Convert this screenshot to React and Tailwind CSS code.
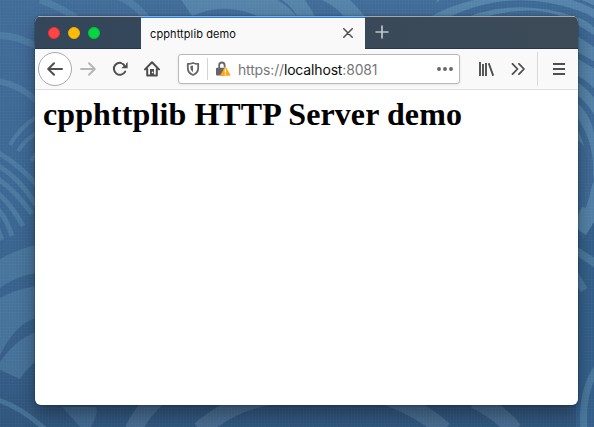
import React from "react";

function Wallpaper() {
  return (
    <svg className="absolute inset-0 h-[427px] w-[594px]" viewBox="0 0 594 427" fill="none">
      <defs>
        <linearGradient id="base" x1="0" y1="0" x2="0" y2="1">
          <stop offset="0" stopColor="#416c99" />
          <stop offset="0.5" stopColor="#3a6692" />
          <stop offset="0.85" stopColor="#345d87" />
          <stop offset="1" stopColor="#2f557c" />
        </linearGradient>
        <pattern id="weave" width="3" height="3" patternUnits="userSpaceOnUse">
          <path d="M0 .5H3M.5 0V3" stroke="#ffffff" strokeOpacity=".02" />
        </pattern>
      </defs>
      <path fill="url(#base)" d="M0 0H594V427H0z" />
      <g stroke="#5e8db1" strokeOpacity=".45">
        <path d="M-5 35Q18 35 38 47" strokeWidth="7" />
        <path d="M-5 81Q18 83 38 102" strokeWidth="6" />
        <path d="M10 145Q20 127 38 116M18 151Q26 139 38 132M31 161L38 152" strokeWidth="4" />
        <path d="M40 0Q58 6 76 18M120 -3Q136 4 147 19" strokeWidth="7" />
        <path d="M-5 151Q18 163 38 186M-5 164Q18 176 36 205M-5 177Q15 190 32 214M-5 191Q10 202 23 226M-5 206Q6 217 12 236M-5 222L2 240" strokeWidth="5" />
        <path d="M-5 399Q20 406 46 430" strokeWidth="5" />
      </g>
      <g stroke="#5e82a5" strokeOpacity=".48">
        <path d="M133 430Q147 402 170 390M200 430Q240 395 291 395M370 391Q417 405 444 430M475 400Q500 412 514 430" strokeWidth="17" />
      </g>
      <g fill="#5e8db1" fillOpacity=".68">
        <path d="M180 -2H274Q291 7 298 19H263Q228 0 192 16zM282 0H305Q312 10 316 19H298Q294 8 282 0z" />
        <path d="M322 0H350Q360 10 366 18H345Q337 7 322 0zM436 3L440 0H437z" />
        <path d="M425 20Q461 -2 500 -3H594V240L577 229V218L594 181Q590 146 577 140z" />
      </g>
      <g fill="#5e8db1" fillOpacity=".42">
        <path d="M0 259Q18 249 36 245V273Q16 276 0 288zM0 298Q16 289 36 286V318Q16 323 0 355zM0 362Q15 340 36 332V361Q24 372 20 379L0 370z" />
        <path d="M62 407H96Q99 414 89 430H83Z" fillOpacity=".35" />
      </g>
      <g stroke="#3d6995">
        <path d="M447 22Q510 -10 578 14Q591 18 598 27" strokeWidth="7" />
        <path d="M480 22Q541 2 579 29L598 41M577 32L598 46" strokeWidth="6" />
        <path d="M575 54L598 67M575 78Q588 84 598 98M575 97Q598 115 598 145" strokeWidth="6" />
        <path d="M574 118Q601 157 583 207" strokeWidth="6" />
        <path d="M560 -5Q584 1 599 10" strokeWidth="3" />
      </g>
      <path d="M575 222L583 240L594 222V427H576z" fill="#335f8a" />
      <g stroke="#5785aa" strokeOpacity=".6">
        <path d="M575 250L598 265M575 275L584 290" strokeWidth="8" />
        <path d="M584 430Q581 390 598 367" strokeWidth="7" />
      </g>
      <path fill="url(#weave)" d="M0 0H594V427H0z" />
    </svg>
  );
}

function Icon({ className, box, children }) {
  return (
    <svg
      className={"shrink-0 " + className}
      viewBox={box}
      fill="none"
      stroke="#4f4f50"
      strokeWidth="2"
      strokeLinecap="round"
      strokeLinejoin="round"
    >
      {children}
    </svg>
  );
}

function TabBar() {
  return (
    <div className="flex h-[33px] shrink-0 border-t border-[#a5a9ad] bg-linear-to-r from-[#33465a] to-[#3d4b58]">
      <div className="flex w-[106px] items-center gap-2 border-b border-[#293746] pl-[13px]">
        <i className="size-3 rounded-full border border-[#ef3034] bg-[#ff4545]" />
        <i className="size-3 rounded-full border border-[#eead05] bg-[#ffbd08]" />
        <i className="size-3 rounded-full border border-[#04c636] bg-[#04d543]" />
      </div>
      <div className="flex w-[224px] items-center justify-between border-t border-[#0a84ff] bg-[#f9f9fa] pr-[12px] pl-[9px]">
        <span className="font-[Inter,sans-serif] text-[11px] leading-4 tracking-[0.1px] text-[#0c0c0d]">cpphttplib demo</span>
        <Icon className="mb-[2px] h-[10px] w-[10px]" box="0 0 10 10">
          <path d="M.8 .8L9.2 9.2M9.2 .8L.8 9.2" strokeWidth="1.5" />
        </Icon>
      </div>
      <div className="flex flex-1 border-b border-[#293746] pt-[8px] pl-[10px]">
        <Icon className="h-[14px] w-[14px]" box="0 0 14 14">
          <path d="M7 .5V13.5M.5 7H13.5" stroke="#c0c5c9" strokeWidth="1.7" strokeLinecap="butt" />
        </Icon>
      </div>
    </div>
  );
}

function AddressBar() {
  return (
    <div className="ml-[18px] flex h-[30px] w-[282px] shrink-0 items-center rounded-[3px] border border-[#b8b8b9] bg-white pr-[6px] pl-[7px] shadow-[0_1px_3px_rgba(0,0,0,0.08)]">
      <Icon className="h-[14px] w-[14px]" box="0 0 14 14">
        <path d="M7 1Q9.5 1.8 12.2 2V6Q12.2 11 7 13Q1.8 11 1.8 6V2Q4.5 1.8 7 1z" stroke="#666668" strokeWidth="1.8" />
        <path d="M7 3.6V10.2Q4.4 8.8 4.4 6V4z" fill="#666668" stroke="none" />
      </Icon>
      <span className="ml-[7px] h-[22px] w-px bg-[#d4d4d5]" />
      <Icon className="ml-[7px] h-[16px] w-[16px]" box="0 0 16 16">
        <path d="M4.2 7V4.2A2.7 2.7 0 0 1 9.6 4.2V5.5" stroke="#666668" strokeWidth="1.8" />
        <rect x="1" y="6.8" width="9" height="7.6" rx="1" fill="#666668" stroke="none" />
        <path d="M10.4 6.5L14.7 14H6.1z" fill="#ffa70d" stroke="#ffa70d" strokeWidth="1.5" />
        <path d="M10.4 8.5V11.2M10.4 13.2V13.3" stroke="white" strokeWidth="1.3" />
      </Icon>
      <span className="ml-[7px] mt-[2px] w-[142px] font-[Inter,sans-serif] text-[14px] leading-5 tracking-[-0.16px] whitespace-nowrap text-[#777779]">
        https://<span className="text-[#0c0c0d]">localhost</span>:8081
      </span>
      <Icon className="ml-auto h-[4px] w-[16px]" box="0 0 16 4">
        <path d="M2 2H2.01M8 2H8.01M14 2H14.01" stroke="#666668" strokeWidth="3.9" />
      </Icon>
    </div>
  );
}

function Toolbar() {
  return (
    <div className="flex h-[41px] shrink-0 items-center border-b border-[#dfdfe0] bg-[#f9f9fa] pl-[3px]">
      <div className="flex size-[34px] shrink-0 items-center justify-center rounded-full border border-[#aaaaab] bg-white">
        <Icon className="h-[14px] w-[16px]" box="0 0 16 14">
          <path d="M15 7H1.5M7 1.2L1.2 7L7 12.8" />
        </Icon>
      </div>
      <Icon className="ml-[8px] h-[14px] w-[16px]" box="0 0 16 14">
        <path d="M1 7H14.5M9 1.2L14.8 7L9 12.8" stroke="#b7b7b8" />
      </Icon>
      <Icon className="ml-[16px] h-[16px] w-[16px]" box="0 0 16 16">
        <path d="M13.2 10.6A6 6 0 1 1 12.4 3.8L14 5.8" />
        <path d="M15.6 1V7.2H9.4z" fill="#4f4f50" stroke="none" />
        <path d="M9.4 1H14V5.6z" fill="#f9f9fa" stroke="none" />
        <path d="M11 3L14 5.8" strokeWidth="1.8" />
      </Icon>
      <Icon className="ml-[16px] h-[16px] w-[16px]" box="0 0 16 16">
        <path d="M1 8.4L8 1.2L15 8.4M3.2 8V14.6H12.8V8" />
        <path d="M6 8H10V14.6H6z" fill="#4f4f50" stroke="none" />
        <circle cx="8.6" cy="11.4" r=".8" fill="white" stroke="none" />
      </Icon>
      <AddressBar />
      <Icon className="ml-[18px] h-[14px] w-[16px]" box="0 0 16 14">
        <path d="M2 0V14M5 2V14M8 1V14M10.7 1.3L15.2 13.7" strokeWidth="1.9" strokeLinecap="butt" />
      </Icon>
      <Icon className="ml-[17px] h-[12px] w-[14px]" box="0 0 14 12">
        <path d="M1.5 .8L6.5 6L1.5 11.2M8 .8L13 6L8 11.2" strokeWidth="1.8" />
      </Icon>
      <span className="ml-[12px] h-[34px] w-px bg-[#d9d9da]" />
      <Icon className="ml-[15px] h-[12px] w-[12px]" box="0 0 12 12">
        <path d="M.5 1H11.5M.5 6H11.5M.5 11H11.5" strokeWidth="2" />
      </Icon>
    </div>
  );
}

export default function App() {
  return (
    <main className="relative h-[427px] w-[594px] overflow-hidden bg-[#3d6a97] pt-[16px] pl-[35px]">
      <Wallpaper />
      <section className="relative flex h-[389px] w-[543px] flex-col rounded-[6px] shadow-[0_9px_18px_rgba(0,0,0,0.36),0_0_2px_rgba(0,0,0,0.5)]">
        <div className="flex min-h-0 flex-1 flex-col overflow-hidden rounded-[6px] bg-white">
          <TabBar />
          <Toolbar />
          <article className="flex-1 px-[8px] pt-[6px]">
            <h1 className="font-['Liberation_Serif',serif] text-[32px] leading-[37px] font-bold tracking-[0.1px] text-black">cpphttplib HTTP Server demo</h1>
          </article>
        </div>
      </section>
    </main>
  );
}
